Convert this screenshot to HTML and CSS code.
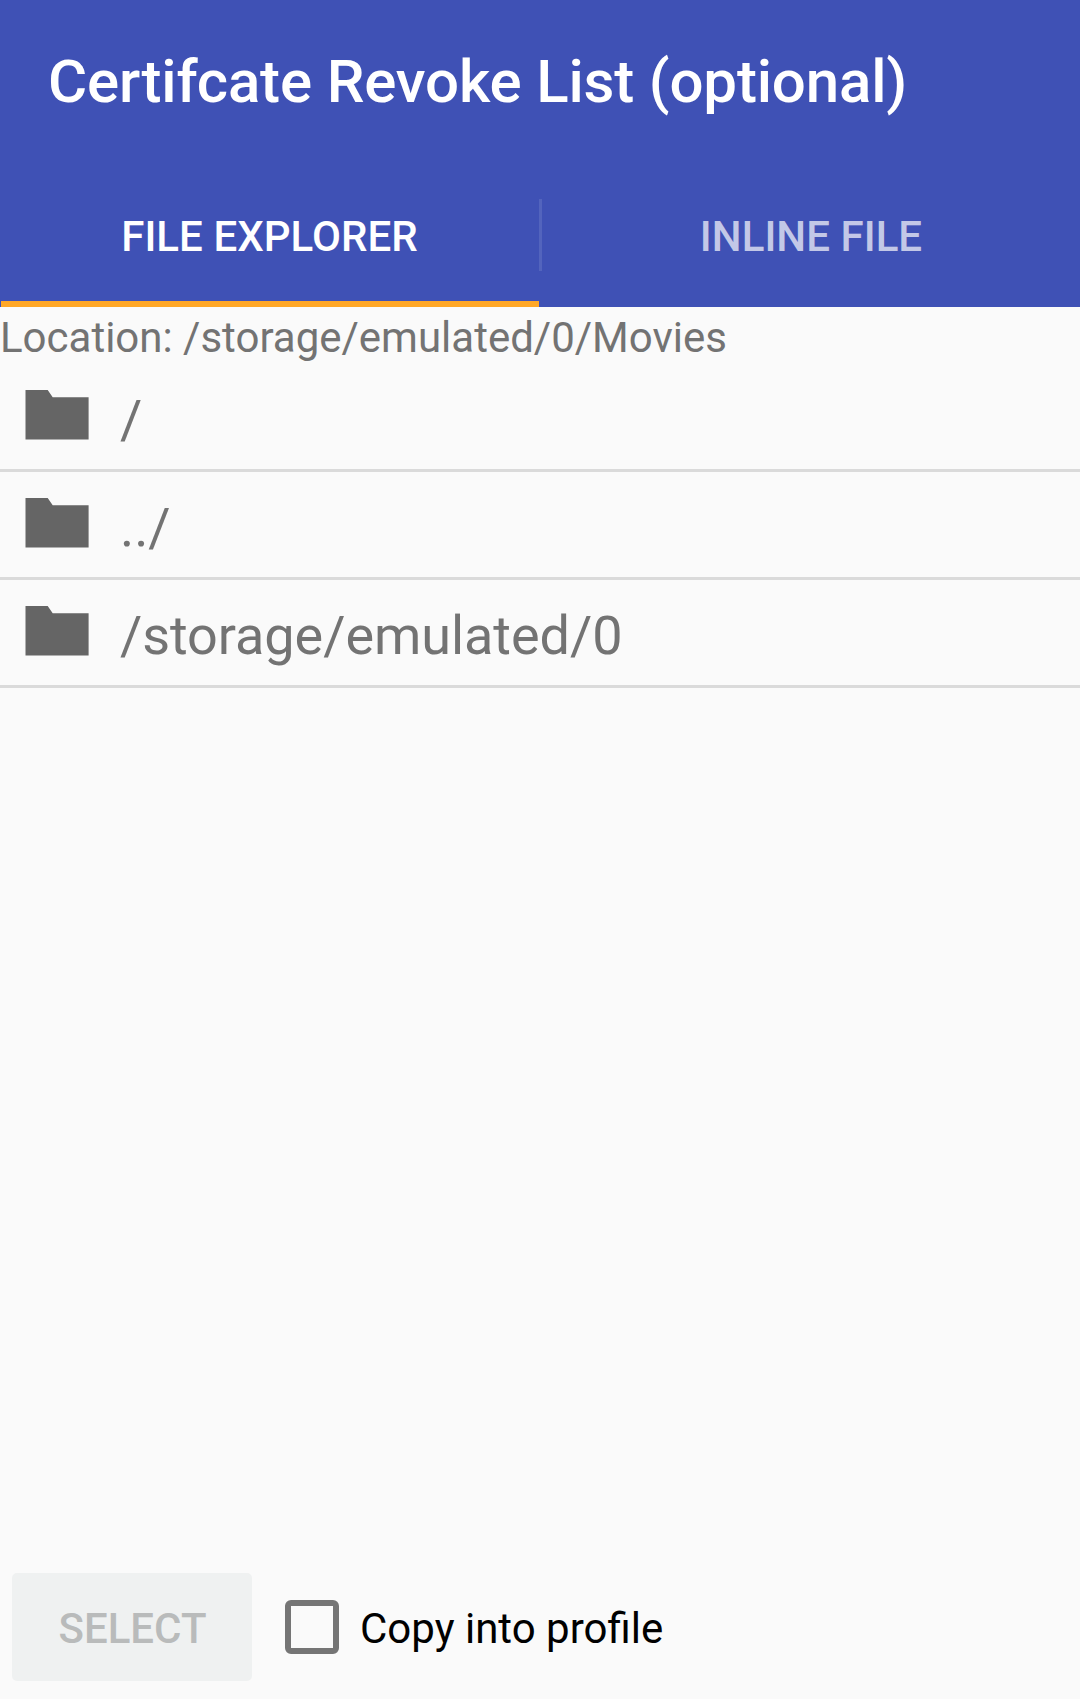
FILE: index.html
```html
<!DOCTYPE html>
<html lang="en">
<head>
<meta charset="utf-8">
<title>Certifcate Revoke List (optional)</title>
<link rel="stylesheet" href="styles.css">
</head>
<body>
<svg class="defs" width="0" height="0"><symbol id="folder" viewBox="0 0 64 50"><path d="M.5 0H22.7L27.7 7.2H63.6V49.6H.5Z"/></symbol></svg>
<header class="header">
  <h1 class="title">Certifcate Revoke List (optional)</h1>
  <nav class="tabs">
    <a class="tab tab-active">FILE EXPLORER</a>
    <span class="divider"></span>
    <a class="tab">INLINE FILE</a>
  </nav>
</header>
<main class="content">
  <p class="location">Location: /storage/emulated/0/Movies</p>
  <ul class="files">
    <li class="file"><svg class="folder"><use href="#folder"/></svg><span>/</span></li>
    <li class="file"><svg class="folder"><use href="#folder"/></svg><span>../</span></li>
    <li class="file"><svg class="folder"><use href="#folder"/></svg><span>/storage/emulated/0</span></li>
  </ul>
</main>
<footer class="footer">
  <button class="select" disabled>SELECT</button>
  <label class="copy"><span class="box"></span><span class="copy-text">Copy into profile</span></label>
</footer>
</body>
</html>
```

FILE: styles.css
```css
* { box-sizing: border-box; }
body {
  margin: 0;
  height: 1699px;
  display: flex;
  flex-direction: column;
  background: #fafafa;
  color: #737373;
  font-family: Roboto, sans-serif;
  overflow: hidden;
}
.defs { position: absolute; }
.header { height: 307px; background: #3f51b5; color: #fff; display: flex; flex-direction: column; }
.title { margin: 0; padding-left: 48px; height: 163px; line-height: 163px; font-size: 60px; font-weight: 500; letter-spacing: -.16px; font-variant-ligatures: none; white-space: nowrap; }
.tabs { flex: 1; display: grid; grid-template-columns: 539px 3px 1fr; }
.tab {
  display: flex;
  align-items: center;
  justify-content: center;
  padding-top: 3px;
  font-size: 42px;
  font-weight: 500;
  letter-spacing: .06px;
  color: rgba(255, 255, 255, .7);
}
.tab-active {
  color: #fff;
  background: linear-gradient(#ffa726, #ffa726) 1px 100% / 538px 6px no-repeat;
}
.divider { height: 72px; margin-top: 36px; background: #5364bd; }
.content { flex: 1; }
.location { margin: 0; height: 57px; line-height: 62px; font-size: 42px; white-space: nowrap; }
.files { list-style: none; margin: 0; padding: 0; }
.file { display: flex; align-items: center; height: 108px; padding: 5px 0 0 25px; border-bottom: 3px solid #dadada; font-size: 54px; letter-spacing: -.06px; }
.folder { width: 64px; height: 50px; margin: -8px 31px 0 0; fill: #656565; }
.footer { display: flex; align-items: center; height: 126px; padding: 0 0 18px 12px; }
.select { width: 240px; height: 108px; padding: 2px 0 0 1px; border: 0; border-radius: 5px; background: #eff1f1; color: #b9bbbb; font: 500 42px Roboto, sans-serif; }
.copy { display: flex; align-items: center; margin-left: 33px; color: #000; font-size: 42px; }
.copy-text { padding-top: 2px; }
.box { width: 54px; height: 54px; margin-right: 21px; border: 6px solid #757575; border-radius: 6px; }
```
